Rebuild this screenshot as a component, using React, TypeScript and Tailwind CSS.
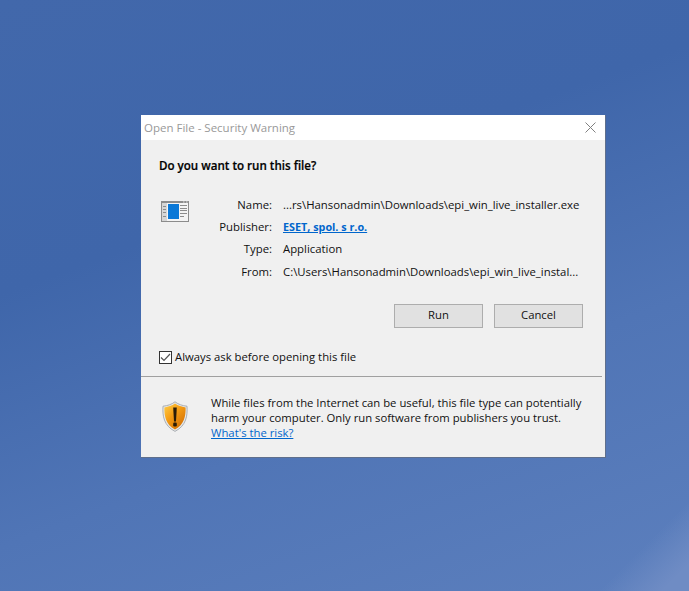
const FONT = "font-['Open_Sans','Noto_Sans',sans-serif]"

const DETAILS = [
  { label: "Name:", value: "...rs\\Hansonadmin\\Downloads\\epi_win_live_installer.exe", height: "h-[23px]" },
  { label: "Publisher:", value: "ESET, spol. s r.o.", link: true, height: "h-[22px]" },
  { label: "Type:", value: "Application", height: "h-[22px]" },
  { label: "From:", value: "C:\\Users\\Hansonadmin\\Downloads\\epi_win_live_instal...", height: "h-[22.6px]" },
]

function AppIcon() {
  return (
    <svg width="28" height="21" viewBox="0 0 28 21" className="shrink-0">
      <rect x="0" y="0" width="28" height="21" fill="#8c8c8c" />
      <rect x="1" y="2" width="26" height="18" fill="#f4f4f4" />
      <rect x="22" y="0.5" width="1.5" height="1" fill="#dcdcdc" />
      <rect x="25" y="0.5" width="1.5" height="1" fill="#dcdcdc" />
      <rect x="1" y="2" width="5" height="18" fill="#d6d6d6" />
      <rect x="2" y="5" width="3" height="1" fill="#8c8c8c" />
      <rect x="2" y="8" width="3" height="1" fill="#8c8c8c" />
      <rect x="2" y="11" width="3" height="1" fill="#8c8c8c" />
      <rect x="2" y="15" width="3" height="1" fill="#8c8c8c" />
      <rect x="7" y="3" width="11" height="15" fill="#0a78d7" />
      <rect x="19" y="4" width="7" height="1" fill="#8c8c8c" />
      <rect x="19" y="7" width="7" height="1" fill="#8c8c8c" />
      <rect x="19" y="9" width="7" height="1" fill="#8c8c8c" />
      <rect x="19" y="12" width="7" height="1" fill="#8c8c8c" />
      <rect x="19" y="15" width="4" height="1" fill="#8c8c8c" />
    </svg>
  )
}

function ShieldIcon() {
  return (
    <svg width="26" height="31" viewBox="0 0 26 31" className="shrink-0">
      <defs>
        <linearGradient id="amber" x1="0" y1="0" x2="0.8" y2="1">
          <stop offset="0" stopColor="#ffd04a" />
          <stop offset="0.45" stopColor="#f59d14" />
          <stop offset="1" stopColor="#d06e06" />
        </linearGradient>
      </defs>
      <path d="M13 0.8C9.6 3.4 5.4 4.8 1 5.2C0.4 14.6 1.6 24.6 13 30.4C24.4 24.6 25.6 14.6 25 5.2C20.6 4.8 16.4 3.4 13 0.8Z" fill="#e6e8ea" stroke="#9a9fa4" strokeWidth="0.8" />
      <path d="M13 2.6C10 4.8 6.2 6 2.4 6.4C2.2 14.6 3.6 23.4 13 28.6C22.4 23.4 23.8 14.6 23.6 6.4C19.8 6 16 4.8 13 2.6Z" fill="url(#amber)" />
      <path d="M11.2 6.5h3.6l-0.8 14h-2Z" fill="#2a1c08" />
      <rect x="11.2" y="21.5" width="3.6" height="4" rx="1.2" fill="#2a1c08" />
    </svg>
  )
}

export default function App() {
  return (
    <div className={`${FONT} relative h-[591px] w-[689px] overflow-hidden bg-[linear-gradient(160deg,#4268ab_0%,#3f66aa_35%,#5075b6_65%,#5c7fbd_100%)] pl-[141px] pt-[115px] text-[11.3px] text-[#111]`}>
      {/* Light streak in the bottom right of the wallpaper */}
      <div className="absolute bottom-0 right-0 h-[90px] w-[90px] bg-[linear-gradient(135deg,transparent_50%,#6f8cc4_85%)]" />

      <div className="relative flex h-[343px] w-[465px] flex-col border-r border-b border-[#5f6f8c] bg-[#f0f0f0]">
        {/* Title bar */}
        <div className="flex h-[25px] items-center justify-between bg-white pl-[3px] pr-[9px]">
          <span className="text-[11.5px] text-[#999999]">Open File - Security Warning</span>
          <svg width="11" height="11" viewBox="0 0 11 11" stroke="#808080" strokeWidth="1">
            <path d="M0.5 0.5L10.5 10.5M10.5 0.5L0.5 10.5" />
          </svg>
        </div>

        <div className="pl-[18px] pt-[17px] text-[11.6px] font-semibold leading-[18px] text-black [-webkit-text-stroke:0.2px_black]">Do you want to run this file?</div>

        {/* File details */}
        <div className="mt-[18px] flex pl-[20px] text-[11.35px]">
          <div className="pt-[8px]">
            <AppIcon />
          </div>
          <div className="flex flex-col">
            {DETAILS.map((row) => (
              <div key={row.label} className={`flex items-center ${row.height}`}>
                <span className="w-[83px] text-right">{row.label}</span>
                <span className={row.link ? "ml-[11px] whitespace-nowrap text-[10.8px] font-bold text-[#0066cc] underline" : "ml-[11px] whitespace-nowrap"}>
                  {row.value}
                </span>
              </div>
            ))}
          </div>
        </div>

        {/* Buttons */}
        <div className="mt-[21px] flex justify-end gap-[11px] pr-[22px]">
          <button className="h-[24px] w-[89px] border border-[#adadad] bg-[#e1e1e1]">Run</button>
          <button className="h-[24px] w-[89px] border border-[#adadad] bg-[#e1e1e1]">Cancel</button>
        </div>

        {/* Checkbox */}
        <div className="mt-[21px] flex items-center gap-[3px] pl-[18px]">
          <span className="flex h-[13px] w-[13px] items-center justify-center border border-[#333] bg-white">
            <svg width="11" height="11" viewBox="0 0 11 11" fill="none" stroke="#555" strokeWidth="1.2">
              <path d="M1 5.5L4 8.5L10 2" />
            </svg>
          </span>
          <span>Always ask before opening this file</span>
        </div>

        <div className="mr-[3px] mt-[10px] h-px bg-[#a0a0a0]" />

        {/* Warning */}
        <div className="flex pl-[21px] pt-[24px]">
          <ShieldIcon />
          <div className="ml-[23px] -mt-[6px] leading-[15px]">
            <p className="whitespace-nowrap">While files from the Internet can be useful, this file type can potentially</p>
            <p className="whitespace-nowrap">harm your computer. Only run software from publishers you trust.</p>
            <a className="text-[#0066cc] underline">What's the risk?</a>
          </div>
        </div>
      </div>
    </div>
  )
}
